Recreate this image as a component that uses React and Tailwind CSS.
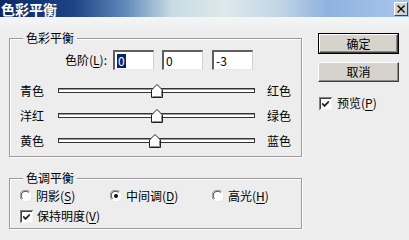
import React from "react"

const font = { fontFamily: '"Noto Sans CJK SC", "Liberation Sans", sans-serif' }

const U = ({ children }) => <span className="underline underline-offset-2">{children}</span>

const GroupBox = ({ title, className = "", children }) => (
  <div className={`flex flex-col border border-[#9a9a9a] shadow-[inset_1px_1px_0_#fff,1px_1px_0_#fff] ${className}`}>
    <span className="-mt-[8px] ml-[13px] self-start bg-[#ededed] px-[3px] leading-[14px] h-[14px]">{title}</span>
    {children}
  </div>
)

const Thumb = ({ left }) => (
  <svg className="absolute -top-[5px]" style={{ left }} width="12" height="14" viewBox="0 0 12 14">
    <path d="M0.5 13.5 V6 L6 0.5 L11.5 6 V13.5 Z" fill="#fff" stroke="#222" />
    <path d="M10.5 6.5 V12.5 H1.5" fill="none" stroke="#888" />
  </svg>
)

const SliderRow = ({ left, right, pos }) => (
  <div className="flex h-[25px] items-center pl-[10px]">
    <span className="w-[38px]">{left}</span>
    <div className="relative h-[5px] w-[197px] border border-[#333] bg-white shadow-[inset_0_1px_0_#999]">
      <Thumb left={pos} />
    </div>
    <span className="ml-[12px]">{right}</span>
  </div>
)

const Radio = ({ checked }) => (
  <svg width="12" height="12" viewBox="0 0 12 12" className="shrink-0">
    <circle cx="6" cy="6" r="5.5" fill="#fff" />
    <path d="M1.6 9.5 A5 5 0 0 1 9.5 1.6" fill="none" stroke="#808080" strokeWidth="1" />
    <path d="M2.5 8.6 A4 4 0 0 1 8.6 2.5" fill="none" stroke="#404040" strokeWidth="1" />
    <path d="M10.4 2.5 A5 5 0 0 1 2.5 10.4" fill="none" stroke="#e6e6e6" strokeWidth="1" />
    {checked && <circle cx="6" cy="6" r="2" fill="#111" />}
  </svg>
)

const Check = () => (
  <svg width="13" height="13" viewBox="0 0 13 13" className="shrink-0">
    <rect x="0" y="0" width="13" height="13" fill="#808080" />
    <rect x="1" y="1" width="12" height="12" fill="#f4f4f4" />
    <rect x="1" y="1" width="11" height="11" fill="#404040" />
    <rect x="2" y="2" width="10" height="10" fill="#fff" />
    <path d="M3.5 6 L5.5 8 L9.5 4 V5.8 L5.5 9.8 L3.5 7.8 Z" fill="#111" stroke="#111" strokeWidth="0.6" />
  </svg>
)

const Field = ({ value, selected }) => (
  <div className="flex h-[20px] w-[41px] items-center border-t-2 border-l-2 border-r border-b border-t-[#5f5f5f] border-l-[#5f5f5f] border-r-[#d0d0d0] border-b-[#e8e8e8] bg-white pl-[2px] leading-none">
    {selected ? (
      <span className="flex h-[14px] items-center bg-[#0a246a] px-[1px] text-white">{value}</span>
    ) : (
      <span>{value}</span>
    )}
  </div>
)

const Button = ({ children, isDefault, className = "" }) => (
  <div className={`${isDefault ? "border border-black" : ""} ${className}`}>
    <div className="flex h-full items-center justify-center border border-t-white border-l-white border-r-[#404040] border-b-[#404040] bg-[#d6d3cc] shadow-[inset_-1px_-1px_0_#8a8a8a]">
      {children}
    </div>
  </div>
)

export default function App() {
  return (
    <div className="flex h-[240px] w-[409px] flex-col overflow-hidden bg-[#ededed] text-[12px] text-black" style={font}>
      <div className="flex h-[17px] items-center justify-between bg-[linear-gradient(90deg,#0b2868_0%,#1d4485_18%,#5c86b8_30%,#c9dbe3_42%,#dde8ea_55%,#c3d6e6_68%,#8fb2de_80%,#a9c6ee_100%)] pl-[1px] pr-[1px]">
        <span className="text-[14px] font-bold leading-none text-white">色彩平衡</span>
        <div className="flex h-[14px] w-[14px] items-center justify-center border border-t-white border-l-white border-r-[#404040] border-b-[#404040] bg-[#d6d3cc] text-[12px] font-bold leading-none">
          ×
        </div>
      </div>

      <div className="flex bg-[linear-gradient(180deg,#f4f6f6_0px,#ededed_16px)]">
        <div className="flex flex-col pl-[9px]">
          <GroupBox title="色彩平衡" className="mt-[21px] h-[119px] w-[293px]">
            <div className="mt-[5px] flex items-center">
              <span className="w-[97px] text-right">
                色阶(<U>L</U>):
              </span>
              <div className="ml-[6px] flex gap-[8px]">
                <Field value="0" selected />
                <Field value="0" />
                <div className="ml-[1px]">
                  <Field value="-3" />
                </div>
              </div>
            </div>
            <div className="mt-[8px] flex flex-col">
              <SliderRow left="青色" right="红色" pos="92px" />
              <SliderRow left="洋红" right="绿色" pos="92px" />
              <SliderRow left="黄色" right="蓝色" pos="90px" />
            </div>
          </GroupBox>

          <GroupBox title="色调平衡" className="mt-[21px] h-[51px] w-[293px]">
            <div className="mt-[1px] flex h-[20px] items-center pl-[10px]">
              <div className="flex w-[90px] items-center gap-[4px]">
                <Radio />
                <span>
                  阴影(<U>S</U>)
                </span>
              </div>
              <div className="flex w-[102px] items-center gap-[4px]">
                <Radio checked />
                <span>
                  中间调(<U>D</U>)
                </span>
              </div>
              <div className="flex items-center gap-[4px]">
                <Radio />
                <span>
                  高光(<U>H</U>)
                </span>
              </div>
            </div>
            <div className="flex h-[20px] items-center gap-[4px] pl-[10px]">
              <Check />
              <span>
                保持明度(<U>V</U>)
              </span>
            </div>
          </GroupBox>
        </div>

        <div className="ml-[16px] flex flex-col">
          <Button isDefault className="mt-[16px] h-[21px] w-[81px]">确定</Button>
          <Button className="mt-[8px] h-[20px] w-[81px]">取消</Button>
          <div className="mt-[12px] flex items-center gap-[5px] pl-[1px]">
            <Check />
            <span>
              预览(<U>P</U>)
            </span>
          </div>
        </div>
      </div>
    </div>
  )
}
